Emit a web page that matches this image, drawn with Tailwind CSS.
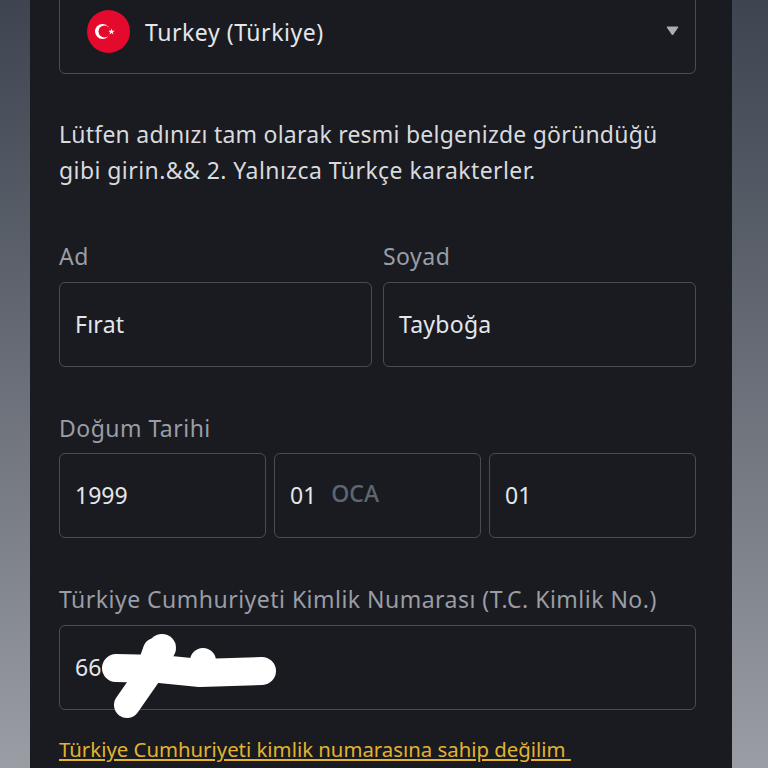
<!DOCTYPE html>
<html lang="tr">
<head>
<meta charset="utf-8">
<script src="https://cdn.jsdelivr.net/npm/@tailwindcss/browser@4"></script>
</head>
<body class="m-0">
<div class="relative h-[768px] w-[768px] overflow-hidden bg-linear-to-b from-[#3e4550] to-[#9a9da4] font-['Noto_Sans',sans-serif]">
  <div class="ml-[30px] h-[768px] w-[702px] overflow-hidden bg-[#191b20] pl-[29px] pr-[36px]">
    <div class="flex h-[85px] -mt-[11px] items-center rounded-md border border-[#474d57] pl-[27px] pr-[15px]">
      <svg class="h-[43px] w-[43px] shrink-0" viewBox="0 0 43 43">
        <circle cx="21.5" cy="21.5" r="21.5" fill="#e30a2d"/>
        <circle cx="15.5" cy="21.5" r="7.5" fill="#fff"/>
        <circle cx="17.5" cy="21.5" r="6" fill="#e30a2d"/>
        <polygon points="24.5,18.5 25.3,20.8 27.7,20.8 25.8,22.2 26.5,24.5 24.5,23.1 22.5,24.5 23.2,22.2 21.3,20.8 23.7,20.8" fill="#fff"/>
      </svg>
      <span class="ml-[15px] text-[23px] leading-[30px] tracking-[0.55px] text-[#e4e6ea]">Turkey (Türkiye)</span>
      <svg class="ml-auto -mt-[2px] mr-[1px] h-[10px] w-[13px]" viewBox="0 0 13 10"><path d="M1 1H12L6.5 9Z" fill="#a9adb5" stroke="#a9adb5" stroke-linejoin="round"/></svg>
    </div>

    <p class="mt-[42px] text-[23px] leading-[36px] tracking-[0.23px] text-[#d8dade]">Lütfen adınızı tam olarak resmi belgenizde göründüğü<br><span class="tracking-[0.43px]">gibi girin.&amp;&amp; 2. Yalnızca Türkçe karakterler.</span></p>

    <div class="mt-[53px] grid grid-cols-2 gap-x-[11px]">
      <div>
        <div class="text-[23px] leading-[30px] tracking-[0.48px] text-[#9a9da5]">Ad</div>
        <div class="mt-[11px] flex h-[85px] items-center rounded-md border border-[#474d57] px-[15px] text-[23px] tracking-[0.25px] text-[#e4e6ea]">Fırat</div>
      </div>
      <div>
        <div class="text-[23px] leading-[30px] tracking-[0.48px] text-[#9a9da5]">Soyad</div>
        <div class="mt-[11px] flex h-[85px] items-center rounded-md border border-[#474d57] px-[15px] text-[23px] tracking-[0.25px] text-[#e4e6ea]">Tayboğa</div>
      </div>
    </div>

    <div class="mt-[46px] text-[23px] leading-[30px] tracking-[0.48px] text-[#9a9da5]">Doğum Tarihi</div>
    <div class="mt-[10px] grid grid-cols-3 gap-x-[8px]">
      <div class="flex h-[85px] items-center rounded-md border border-[#474d57] px-[15px] text-[23px] text-[#e4e6ea]">1999</div>
      <div class="flex h-[85px] items-center rounded-md border border-[#474d57] px-[15px] text-[23px] text-[#e4e6ea]">01<span class="ml-[15px] -mt-[5px] font-medium text-[#5e6673]">OCA</span></div>
      <div class="flex h-[85px] items-center rounded-md border border-[#474d57] px-[15px] text-[23px] text-[#e4e6ea]">01</div>
    </div>

    <div class="mt-[46px] text-[23px] leading-[30px] tracking-[0.48px] text-[#9a9da5]">Türkiye Cumhuriyeti Kimlik Numarası (T.C. Kimlik No.)</div>
    <div class="relative mt-[11px] flex h-[85px] items-center rounded-md border border-[#474d57] px-[15px] text-[23px] text-[#e4e6ea]">
      66
      <svg class="absolute left-[40px] top-[6px] h-[90px] w-[190px] overflow-visible" viewBox="0 0 190 90" fill="#fff" stroke="none">
        <path d="M27 73 L50 40" fill="none" stroke="#fff" stroke-width="26" stroke-linecap="round"/>
        <circle cx="62" cy="16" r="14"/>
        <path d="M55 18 L48 38" fill="none" stroke="#fff" stroke-width="24" stroke-linecap="round"/>
        <path d="M16 36 L60 37 L100 41 L162 39" fill="none" stroke="#fff" stroke-width="28" stroke-linecap="round" stroke-linejoin="round"/>
        <circle cx="103" cy="29" r="13"/>
      </svg>
    </div>

    <a class="mt-[24px] block text-[20.35px] leading-[30px] text-[#e3b32f] underline">Türkiye Cumhuriyeti kimlik numarasına sahip değilim&nbsp;</a>
  </div>
</div>
</body>
</html>
